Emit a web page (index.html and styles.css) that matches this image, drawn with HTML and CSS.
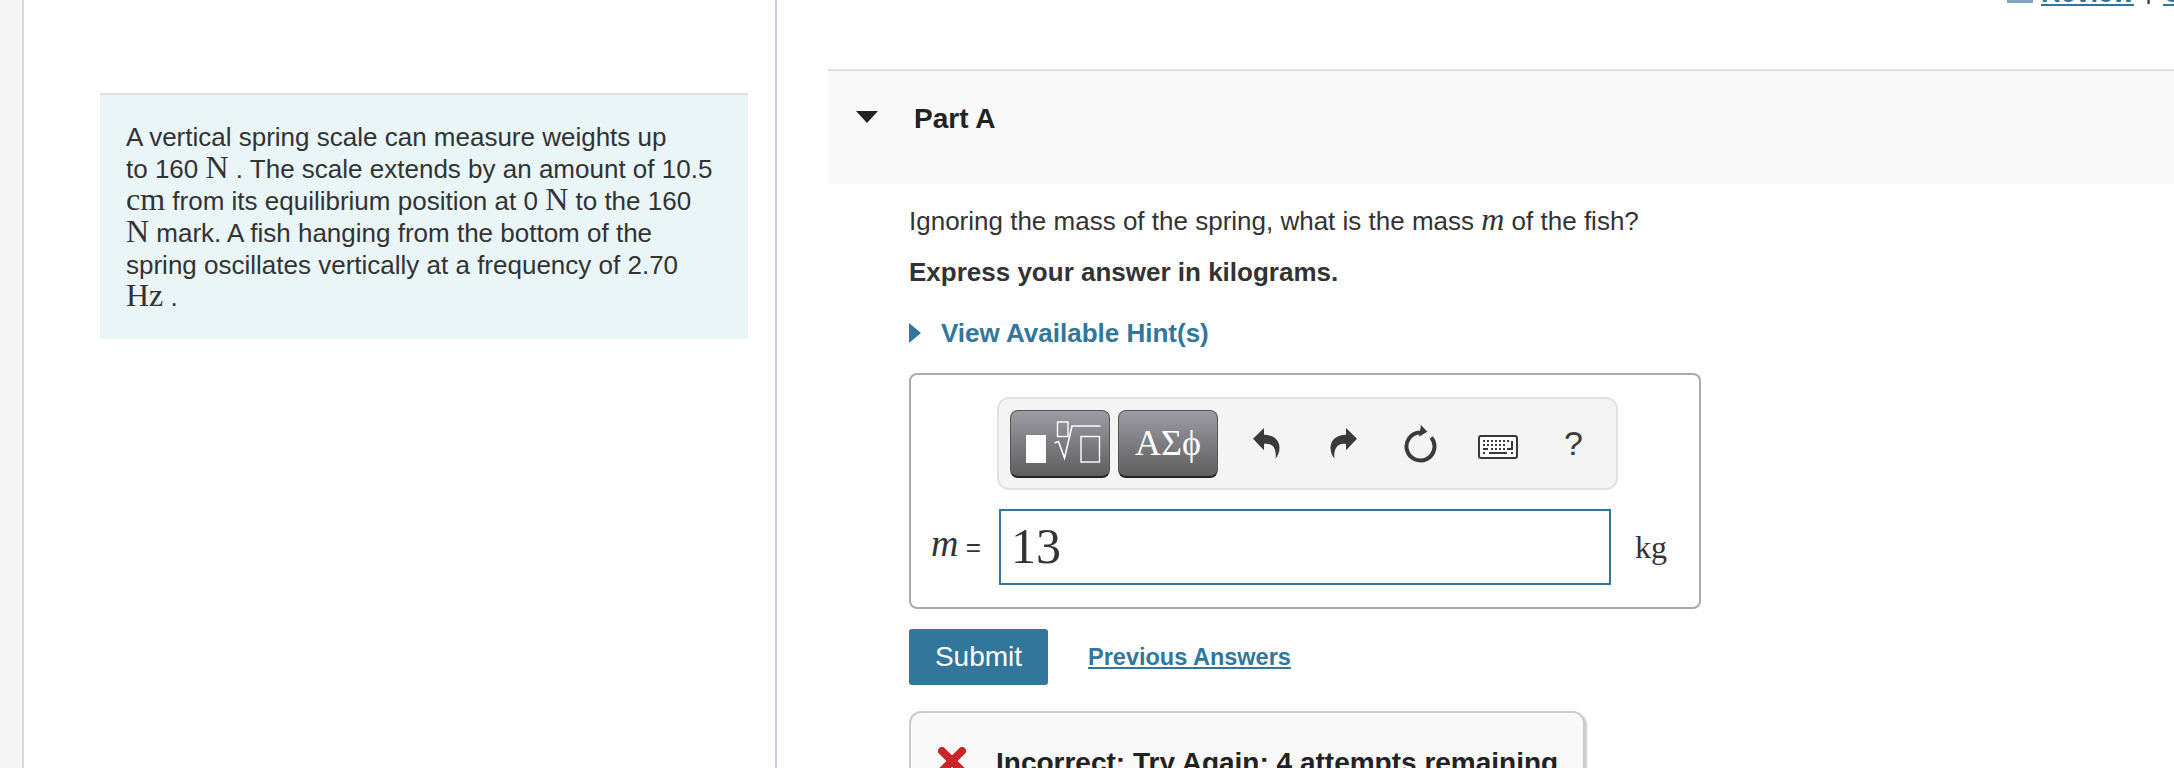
FILE: index.html
```html
<!DOCTYPE html>
<html lang="en">
  <head>
    <meta charset="UTF-8" />
    <meta name="viewport" content="width=device-width, initial-scale=1.0" />
    <title>Part A</title>
    <link rel="stylesheet" href="styles.css">
  </head>
  <body>
    <div class="page">
      <div class="gutter"></div>

      <div class="intro-col">
        <div class="intro">
          A vertical spring scale can measure weights up<br>
          to 160 <span class="math">N</span> . The scale extends by an amount of 10.5<br>
          <span class="math">cm</span> from its equilibrium position at 0 <span class="math">N</span> to the 160<br>
          <span class="math">N</span> mark. A fish hanging from the bottom of the<br>
          spring oscillates vertically at a frequency of 2.70<br>
          <span class="math">Hz</span> .
        </div>
      </div>

      <div class="work-col">
        <div class="top-links">
          <span class="review-icon"></span>
          <a class="top-link" href="#">Review</a>
          <span class="top-sep">|</span>
          <a class="top-link top-link-cut" href="#">Constants</a>
        </div>

        <div class="part-head">
          <span class="part-arrow"></span>
          <h2>Part A</h2>
        </div>

        <div class="part-body">
          <p class="question">Ignoring the mass of the spring, what is the mass <span class="math-i">m</span> of the fish?</p>
          <p class="express">Express your answer in kilograms.</p>
          <a class="hint" href="#"><span class="hint-arrow"></span>View Available Hint(s)</a>

          <div class="answer-box">
            <div class="toolbar">
              <button class="tool-btn tool-btn-root">
                <svg width="76" height="44" viewBox="0 0 76 44">
                  <rect x="0" y="14" width="20" height="28" fill="#fff" />
                  <rect x="31.5" y="1" width="10.5" height="14.5" fill="none" stroke="#fff" stroke-width="1.4" />
                  <path d="M28.5 22l4-1.5 6 16.5 7.5-32h28.5" fill="none" stroke="#fff" stroke-width="1.6" />
                  <rect x="55" y="15.5" width="18.5" height="25.5" fill="none" stroke="#fff" stroke-width="1.4" />
                </svg>
              </button>
              <button class="tool-btn">ΑΣϕ</button>

              <svg class="tool-icon icon-undo" width="27" height="32" viewBox="0 0 27 32">
                <path d="M0 10.7L11 0v6.7c9 0 15.500 5 15.500 13 0 4-1.500 8-4 11 1-7-1-13-6-14.500-2-.5-4-.5-5.500-.5v6.600z" fill="#3a3a3a" />
              </svg>
              <svg class="tool-icon icon-redo" width="27" height="32" viewBox="0 0 27 32">
                <path d="M27 10.7L16 0v6.7c-9 0-15.500 5-15.500 13 0 4 1.500 8 4 11-1-7 1-13 6-14.500 2-.5 4-.5 5.500-.5v6.600z" fill="#3a3a3a" />
              </svg>
              <svg class="tool-icon icon-reset" width="33" height="38" viewBox="0 0 33 38">
                <path d="M16 7.500A14 14 0 1 0 27.200 12.500" fill="none" stroke="#3a3a3a" stroke-width="4" />
                <path d="M17 0l6.300 6.700-8.300 5z" fill="#3a3a3a" />
              </svg>
              <svg class="tool-icon icon-keys" width="40" height="24" viewBox="0 0 40 24">
                <rect x="1" y="1" width="38" height="22" rx="2" fill="#fff" stroke="#3a3a3a" stroke-width="2" />
                <path d="M5 6h2M9 6h2M13 6h2M17 6h2M21 6h2M25 6h2M29 6h2M5 10h2M9 10h2M13 10h2M17 10h2M21 10h2M25 10h2M5 14h5M13 14h2M17 14h2M21 14h2M25 14h2M34 6v8h-5M5 18h2M11 18h18M33 18h2" stroke="#3a3a3a" stroke-width="2" fill="none" />
              </svg>
              <span class="tool-help">?</span>
            </div>

            <div class="answer-row">
              <label class="answer-label"><span class="math-i">m</span> =</label>
              <div class="answer-input">13</div>
              <span class="answer-unit">kg</span>
            </div>
          </div>

          <div class="actions">
            <button class="btn-submit">Submit</button>
            <a class="prev-link" href="#">Previous Answers</a>
          </div>

          <div class="feedback">
            <svg class="feedback-x" width="28" height="28" viewBox="0 0 28 28">
              <path d="M4 4l20 20M24 4L4 24" fill="none" stroke="#c9262a" stroke-width="8" stroke-linecap="round" />
            </svg>
            <span class="feedback-text">Incorrect; Try Again; 4 attempts remaining</span>
          </div>
        </div>
      </div>
    </div>
  </body>
</html>
```

FILE: styles.css
```css
* {
  margin: 0;
  padding: 0;
  box-sizing: border-box;
}

body {
  background-color: white;
  color: #333;
  font-family: 'Liberation Sans', Arial, sans-serif;
  height: 768px;
  overflow: hidden;
}

a {
  color: #32779b;
}

.page {
  display: flex;
  height: 768px;
}

.gutter {
  width: 24px;
  flex: none;
  background-color: #f5f5f5;
  border-right: 2px solid #d9d9d9;
}

.intro-col {
  width: 753px;
  flex: none;
  padding: 93px 27px 0 76px;
  border-right: 2px solid #c5d1e2;
}

.intro {
  background-color: #e9f5f7;
  border-top: 2px solid #dfe3e3;
  padding: 26px 26px 0;
  font-size: 26px;
  line-height: 32px;
  height: 246px;
}

.math {
  font-family: 'Liberation Serif', 'Times New Roman', serif;
  font-size: 32px;
  line-height: 0;
}

.math-i {
  font-family: 'Liberation Serif', 'Times New Roman', serif;
  font-style: italic;
  font-size: 32px;
  line-height: 0;
}

.work-col {
  flex: 1;
  min-width: 0;
  padding-left: 51px;
}

.top-links {
  height: 6px;
  margin-bottom: 63px;
  display: flex;
  justify-content: flex-end;
  align-items: flex-end;
  font-size: 27px;
  font-weight: bold;
  line-height: 26px;
  white-space: nowrap;
}

.review-icon {
  width: 26px;
  height: 3px;
  margin-right: 8px;
  margin-bottom: 3px;
  background-color: #7fa6bc;
}

.top-link {
  flex: none;
}

.top-link-cut {
  width: 11px;
  overflow: hidden;
}

.top-sep {
  margin: 0 11px 4px;
  font-weight: normal;
}

.part-head {
  display: flex;
  align-items: center;
  height: 115px;
  background-color: #f9f9f9;
  border-top: 2px solid #e0e0e0;
  padding: 0 0 22px 28px;
}

.part-arrow {
  width: 0;
  height: 0;
  border-left: 11px solid transparent;
  border-right: 11px solid transparent;
  border-top: 12px solid #222;
  margin-right: 36px;
}

.part-head h2 {
  font-size: 28px;
  color: #222;
  padding-top: 4px;
}

.part-body {
  padding: 21px 0 0 81px;
}

.question {
  font-size: 26px;
  line-height: 32px;
  margin-bottom: 19px;
}

.express {
  font-size: 26px;
  font-weight: bold;
  line-height: 32px;
  margin-bottom: 29px;
}

.hint {
  display: flex;
  align-items: center;
  font-size: 26px;
  font-weight: bold;
  line-height: 32px;
  text-decoration: none;
  margin-bottom: 24px;
}

.hint-arrow {
  width: 0;
  height: 0;
  border-top: 10px solid transparent;
  border-bottom: 10px solid transparent;
  border-left: 12px solid #32779b;
  margin-right: 20px;
}

.answer-box {
  width: 792px;
  height: 236px;
  border: 2px solid #aaa;
  border-radius: 8px;
  padding: 22px 0 0 86px;
}

.toolbar {
  display: flex;
  align-items: center;
  width: 621px;
  height: 93px;
  background-color: #f4f4f4;
  border: 2px solid #e2e2e2;
  border-radius: 12px;
  padding-left: 11px;
}

.tool-btn {
  width: 100px;
  height: 68px;
  margin-right: 8px;
  border: 1px solid #555;
  border-bottom: 2px solid #222;
  border-radius: 8px;
  background: linear-gradient(#9b9ba3, #5f5f5f);
  color: white;
  font-family: 'Liberation Serif', 'Times New Roman', serif;
  font-size: 36px;
  cursor: pointer;
}

.tool-btn svg {
  display: block;
  margin-left: 15px;
}

.tool-icon {
  flex: none;
}

.icon-undo {
  margin-left: 27px;
}

.icon-redo {
  margin-left: 50px;
}

.icon-reset {
  margin-left: 47px;
}

.icon-keys {
  margin-left: 41px;
  margin-top: 6px;
}

.tool-help {
  margin-left: 46px;
  font-size: 34px;
  color: #3a3a3a;
}

.answer-row {
  display: flex;
  align-items: center;
  margin-top: 19px;
  margin-left: -66px;
}

.answer-label {
  width: 68px;
  font-size: 26px;
}

.answer-label .math-i {
  font-size: 38px;
}

.answer-input {
  width: 612px;
  height: 76px;
  border: 2px solid #32779b;
  padding-left: 10px;
  font-family: 'Liberation Serif', 'Times New Roman', serif;
  font-size: 50px;
  line-height: 70px;
  color: #333;
}

.answer-unit {
  margin-left: 24px;
  font-family: 'Liberation Serif', 'Times New Roman', serif;
  font-size: 32px;
}

.actions {
  display: flex;
  align-items: center;
  margin-top: 20px;
}

.btn-submit {
  width: 139px;
  height: 56px;
  background-color: #32779b;
  color: white;
  border: none;
  border-radius: 3px;
  font-family: 'Liberation Sans', Arial, sans-serif;
  font-size: 28px;
  cursor: pointer;
}

.prev-link {
  margin-left: 40px;
  font-size: 23.500px;
  font-weight: bold;
}

.feedback {
  display: flex;
  align-items: flex-start;
  width: 676px;
  height: 120px;
  margin-top: 26px;
  padding: 34px 0 0 27px;
  background-color: #f9f9f9;
  border: 2px solid #ccc;
  border-radius: 12px;
  box-shadow: 2px 2px 2px #ccc;
}

.feedback-x {
  flex: none;
}

.feedback-text {
  margin-left: 30px;
  font-size: 28px;
  font-weight: bold;
  color: #222;
}
```
